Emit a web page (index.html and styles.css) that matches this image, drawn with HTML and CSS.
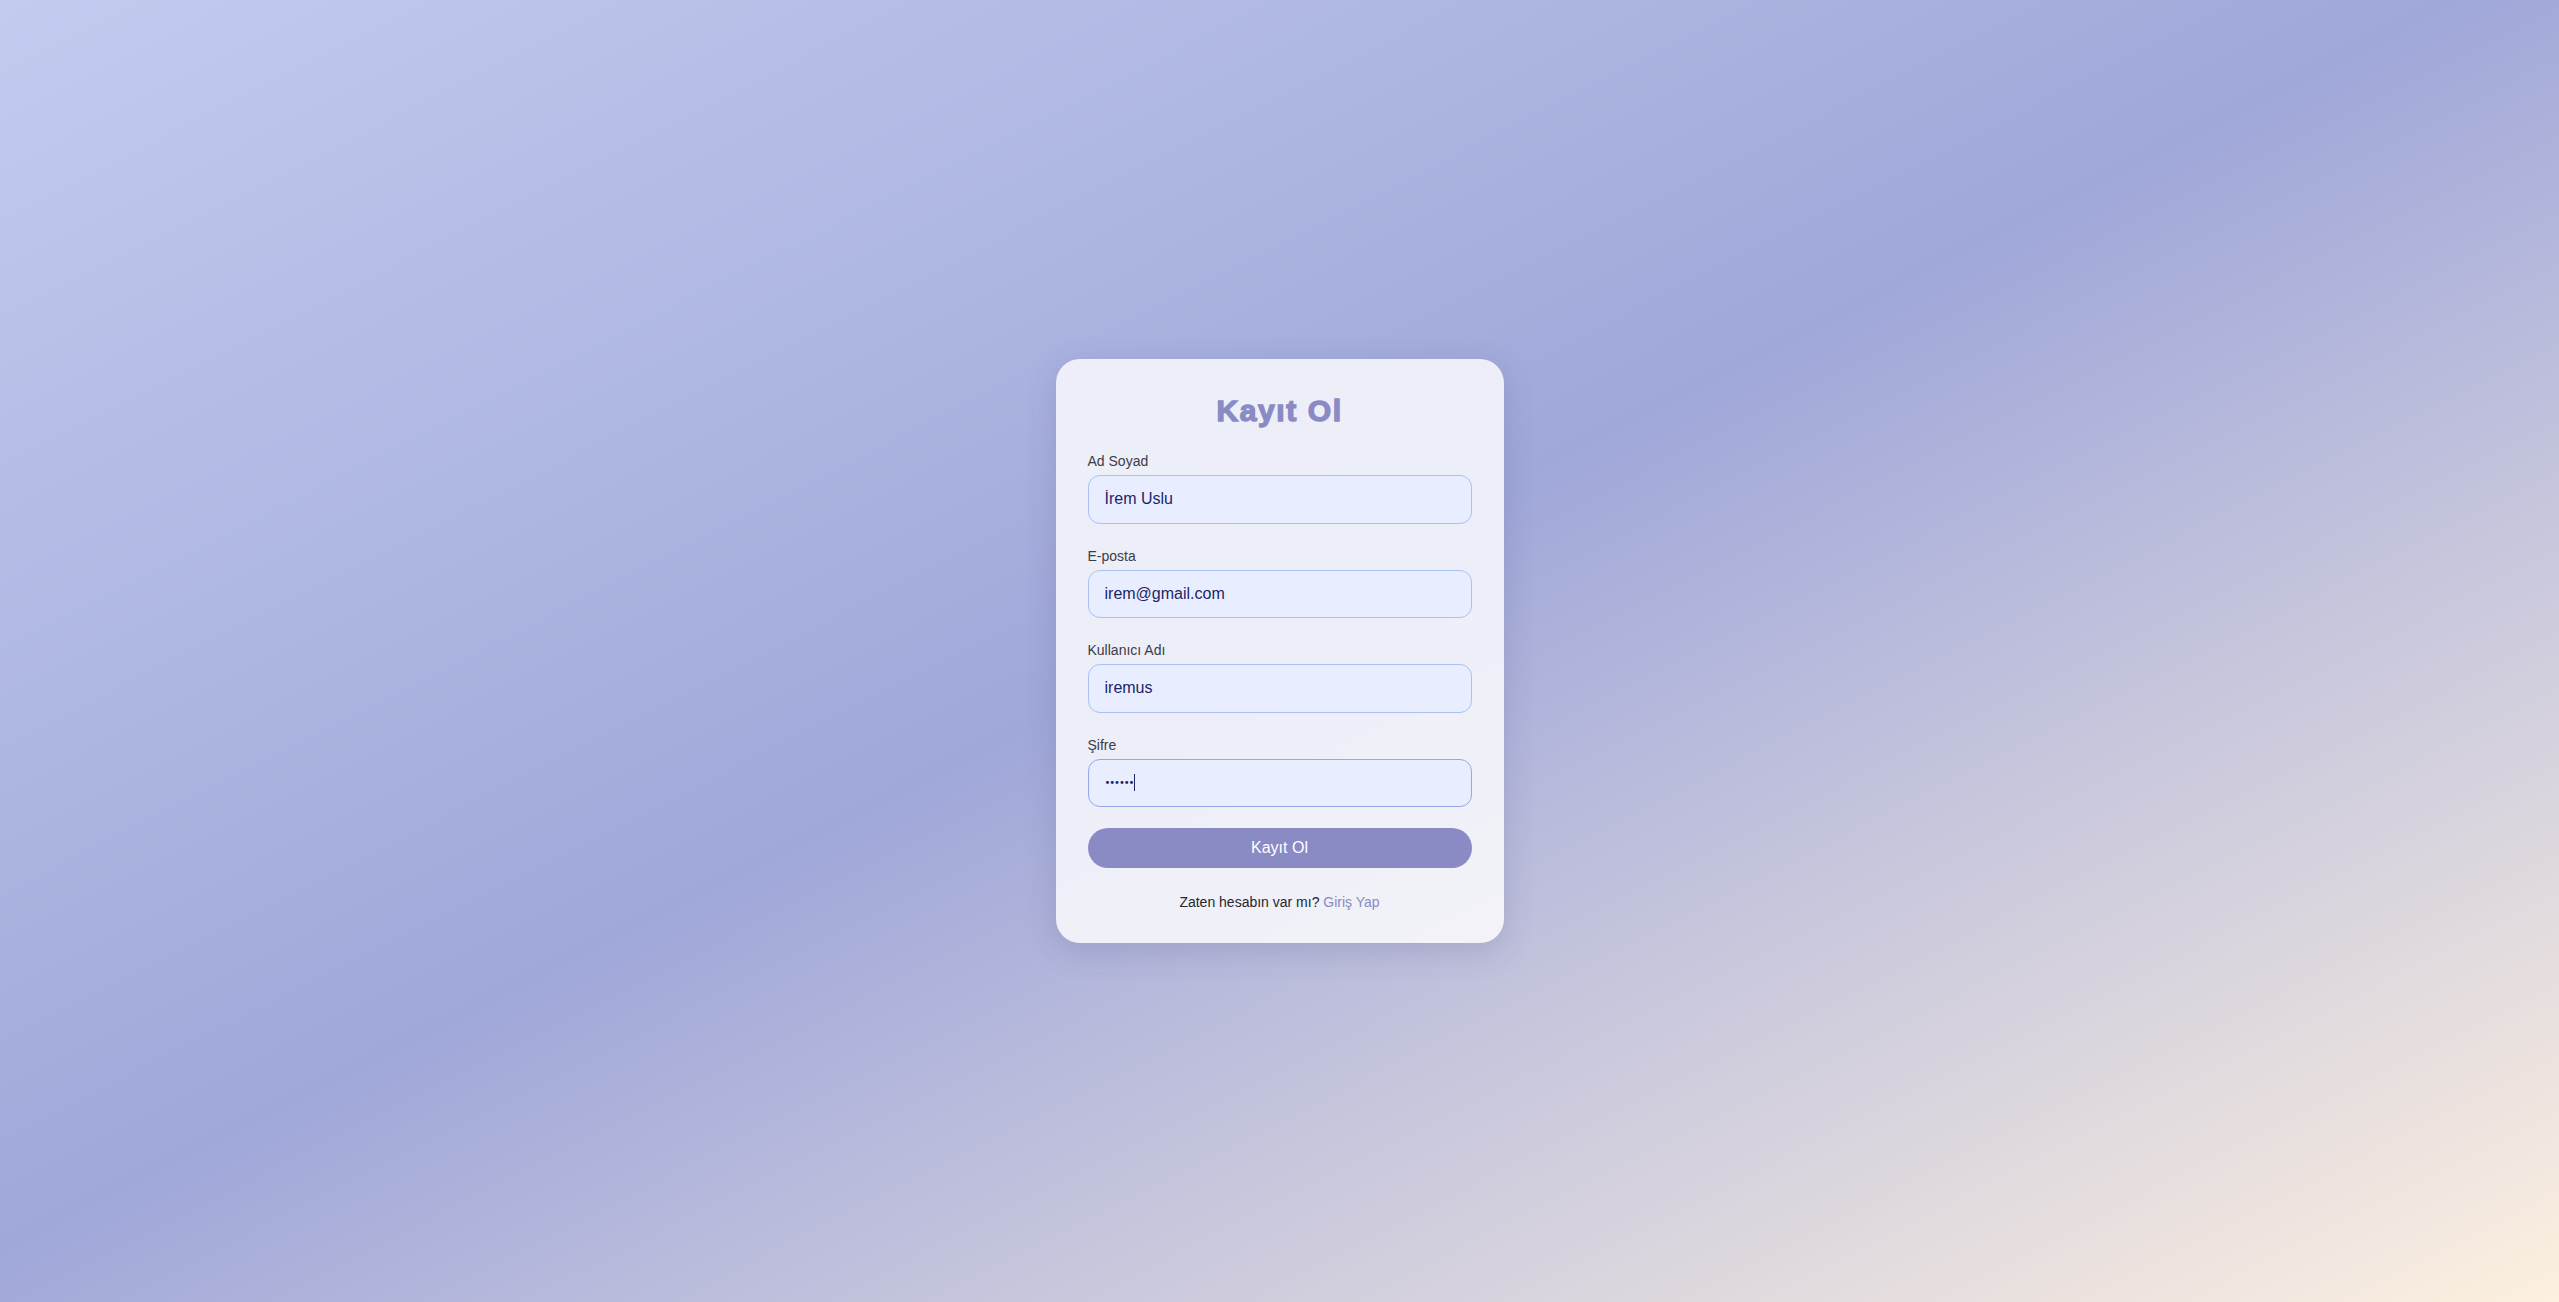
FILE: index.html
```html
<!DOCTYPE html>
<html lang="tr">
<head>
<meta charset="utf-8">
<title>Kayıt Ol</title>
<link rel="stylesheet" href="styles.css">
</head>
<body>
<main class="page">
  <form class="card">
    <h1 class="title">Kayıt Ol</h1>
    <div class="field">
      <label class="label" for="name">Ad Soyad</label>
      <input class="input" id="name" type="text" value="İrem Uslu">
    </div>
    <div class="field">
      <label class="label" for="email">E-posta</label>
      <input class="input" id="email" type="text" value="irem@gmail.com">
    </div>
    <div class="field">
      <label class="label" for="user">Kullanıcı Adı</label>
      <input class="input" id="user" type="text" value="iremus">
    </div>
    <div class="field field-last">
      <label class="label" for="pass">Şifre</label>
      <div class="input input-focus"><span class="dots">••••••</span><span class="caret"></span></div>
    </div>
    <button class="btn" type="button">Kayıt Ol</button>
    <p class="foot">Zaten hesabın var mı? <a class="link" href="#">Giriş Yap</a></p>
  </form>
</main>
</body>
</html>
```
FILE: styles.css
```css
html, body {
  margin: 0;
  padding: 0;
  height: 100%;
}
body {
  font-family: "Liberation Sans", Arial, sans-serif;
  background: linear-gradient(to bottom right, #c3cbef 0%, #a0a8da 48%, #fdf0e0 100%);
}
.page {
  height: 1302px;
  display: flex;
  align-items: center;
  justify-content: center;
}
.card {
  width: 384px;
  padding: 31px 32px 33px;
  background: rgba(255, 255, 255, 0.8);
  border-radius: 24px;
  box-shadow: 0 8px 32px rgba(60, 60, 110, 0.18);
  box-sizing: content-box;
}
.title {
  margin: 0 0 21px;
  text-align: center;
  font-family: "Liberation Sans", Arial, sans-serif;
  font-weight: 700;
  font-size: 30px;
  line-height: 42px;
  letter-spacing: 1.6px;
  color: #8a8ac4;
  -webkit-text-stroke: 1.4px #8a8ac4;
}
.field {
  margin-bottom: 24px;
}
.field-last {
  margin-bottom: 21px;
}
.label {
  display: block;
  font-size: 14px;
  line-height: 16px;
  color: #3c3c48;
  margin-bottom: 6px;
}
.input {
  display: block;
  width: 100%;
  box-sizing: border-box;
  height: 48.5px;
  padding: 0 16px;
  font-family: "Liberation Sans", Arial, sans-serif;
  font-size: 16px;
  color: #1e2566;
  background: #e8eeff;
  border: 1px solid #a9c0f2;
  border-radius: 12px;
  outline: none;
}
.input-focus {
  display: flex;
  align-items: center;
  border-color: #97a6e6;
  background: #e9eefe;
}
.dots {
  font-family: "DejaVu Sans", sans-serif;
  font-size: 10px;
  letter-spacing: -1.1px;
  line-height: 16px;
  color: #1e2566;
}
.caret {
  display: inline-block;
  width: 1px;
  height: 17px;
  background: #1e2566;
  margin-left: 1px;
}
.btn {
  display: block;
  width: 100%;
  height: 40px;
  border: none;
  border-radius: 20px;
  background: #8a8ac4;
  color: #ffffff;
  font-family: "Liberation Sans", Arial, sans-serif;
  font-size: 16px;
  cursor: pointer;
}
.foot {
  margin: 26px 0 0;
  text-align: center;
  font-size: 14px;
  line-height: 16px;
  color: #26262e;
}
.link {
  color: #8a8ac4;
  text-decoration: none;
}
```
